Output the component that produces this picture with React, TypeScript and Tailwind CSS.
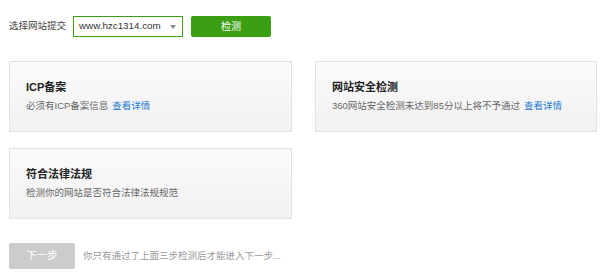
import React from 'react';

type Check = {
  title: string;
  desc: string;
  link?: boolean;
};

const checks: Check[] = [
  { title: 'ICP备案', desc: '必须有ICP备案信息', link: true },
  { title: '网站安全检测', desc: '360网站安全检测未达到85分以上将不予通过', link: true },
  { title: '符合法律法规', desc: '检测你的网站是否符合法律法规规范' },
];

const CheckCard: React.FC<{ item: Check }> = ({ item }) => (
  <div className="h-[71px] border border-[#e2e2e2] bg-gradient-to-b from-[#fbfbfb] to-[#f1f1f1] px-[16px] pt-[18px]">
    <div className="text-[11px] leading-[14px] font-bold text-[#222]">{item.title}</div>
    <div className="mt-[5px] text-[9.5px] leading-[14px] text-[#666]">
      {item.desc}
      {item.link && <a className="ml-[4px] text-[#1879d0] cursor-pointer">查看详情</a>}
    </div>
  </div>
);

export default function App() {
  return (
    <div
      className="w-[600px] h-[273px] bg-white pl-[9px] pt-[16px]"
      style={{ fontFamily: '"Liberation Sans", "Noto Sans CJK SC", sans-serif' }}
    >
      <div className="flex items-center h-[21px]">
        <span className="text-[9.5px] text-[#444] w-[64px]">选择网站提交</span>
        <div className="flex items-center justify-between w-[110px] h-[21px] border border-[#3d9c15] bg-white pl-[5px] pr-[6px]">
          <span className="text-[9.8px] text-[#333]">www.hzc1314.com</span>
          <span className="w-0 h-0 border-l-[3px] border-r-[3px] border-t-[4px] border-l-transparent border-r-transparent border-t-[#888]" />
        </div>
        <button className="ml-[8px] w-[80px] h-[21px] rounded-[2px] bg-[#3c9e12] text-white text-[10px]">检测</button>
      </div>

      <div className="grid grid-cols-[283px_282px] gap-x-[23px] gap-y-[16px] mt-[24px]">
        {checks.map((c) => (
          <CheckCard key={c.title} item={c} />
        ))}
      </div>

      <div className="flex items-center mt-[24px]">
        <button className="w-[66px] h-[26px] rounded-[2px] bg-[#cccccc] text-white text-[10.5px]">下一步</button>
        <span className="ml-[8px] text-[9.5px] text-[#999]">你只有通过了上面三步检测后才能进入下一步...</span>
      </div>
    </div>
  );
}
